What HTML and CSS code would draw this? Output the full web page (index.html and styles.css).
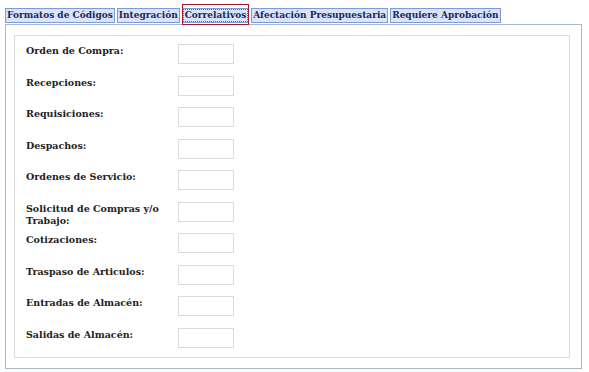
FILE: index.html
```html
<!DOCTYPE html>
<html lang="es">
<head>
  <meta charset="UTF-8">
  <title>Correlativos</title>
  <link rel="stylesheet" href="styles.css">
</head>
<body>
  <!-- Pestañas -->
  <div class="tabs">
    <span class="tab">Formatos de Códigos</span>
    <span class="tab">Integración</span>
    <span class="tab active">Correlativos</span>
    <span class="tab">Afectación Presupuestaria</span>
    <span class="tab">Requiere Aprobación</span>
  </div>

  <div class="panel">
    <div class="inner">
      <div class="row"><label>Orden de Compra:</label><input type="text"></div>
      <div class="row"><label>Recepciones:</label><input type="text"></div>
      <div class="row"><label>Requisiciones:</label><input type="text"></div>
      <div class="row"><label>Despachos:</label><input type="text"></div>
      <div class="row"><label>Ordenes de Servicio:</label><input type="text"></div>
      <div class="row"><label>Solicitud de Compras y/o Trabajo:</label><input type="text"></div>
      <div class="row"><label>Cotizaciones:</label><input type="text"></div>
      <div class="row"><label>Traspaso de Articulos:</label><input type="text"></div>
      <div class="row"><label>Entradas de Almacén:</label><input type="text"></div>
      <div class="row"><label>Salidas de Almacén:</label><input type="text"></div>
    </div>
  </div>
</body>
</html>
```
FILE: styles.css
```css
body {
  margin: 0;
  padding: 8px 7px 4px 5px;
  font-family: "DejaVu Serif", serif;
  font-weight: bold;
  background-color: #fff;
}
.tabs {
  display: flex;
  gap: 2px;
  height: 16px;
}
.tab {
  position: relative;
  height: 13px;
  line-height: 13px;
  padding: 0 1px;
  font-size: 9px;
  color: #1a2858;
  background-color: #d9e4f8;
  border: 1px solid #7d9bd8;
  white-space: nowrap;
}
.tab.active {
  padding: 0 2px;
  outline: 1px dotted #5a6d9a;
  outline-offset: -2px;
}
.tab.active::after {
  content: "";
  position: absolute;
  top: -5px;
  bottom: -3px;
  left: -1px;
  right: -1px;
  border: 1px solid #a01c2c;
}
.panel {
  border: 1px solid #a9b7cd;
  padding: 10px 11px 10px 8px;
}
.inner {
  border: 1px solid #d9dde2;
  padding: 2px 10px 4px 11px;
}
.row {
  display: flex;
  height: 31.5px;
  align-items: flex-start;
  padding-top: 6px;
  box-sizing: border-box;
}
label {
  width: 152px;
  font-size: 9.5px;
  line-height: 12px;
  color: #222;
  padding-top: 1px;
}
input {
  width: 56px;
  height: 20px;
  box-sizing: border-box;
  border: 1px solid #dcdcdc;
  margin: 0;
  padding: 0;
}
```
